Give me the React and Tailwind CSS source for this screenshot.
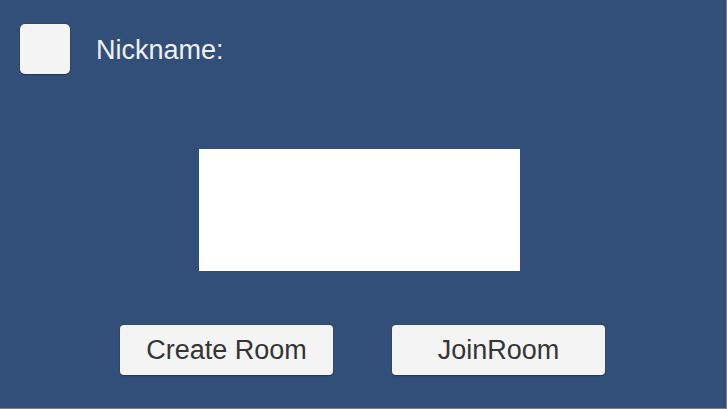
export default function App() {
  const font = { fontFamily: '"Liberation Sans", Arial, sans-serif' };
  return (
    <div className="w-[727px] h-[409px] bg-[#808080]" style={font}>
      <div className="w-[726px] h-[408px] bg-[#314f79] flex flex-col">
        <div className="flex items-center pt-[24px] pl-[20px]">
          <div className="w-[50px] h-[50px] rounded-[5px] bg-[#f4f4f4] shadow-[0_0_0_1px_rgba(60,60,60,0.35),0_1px_1px_rgba(0,0,0,0.35)]" />
          <div className="ml-[26px] text-[27px] leading-none text-[#f0f0f0] mt-[2px]">Nickname:</div>
        </div>
        <div className="ml-[199px] mt-[75px] w-[321px] h-[122px] bg-white" />
        <div className="flex mt-[54px] ml-[120px] gap-[59px]">
          <button className="w-[213px] h-[50px] rounded-[4px] bg-[#f4f4f4] text-[27px] leading-none text-[#353535] shadow-[0_0_0_1px_rgba(60,60,60,0.3),0_1px_1px_rgba(0,0,0,0.35)] flex items-center justify-center">Create Room</button>
          <button className="w-[213px] h-[50px] rounded-[4px] bg-[#f4f4f4] text-[27px] leading-none text-[#353535] shadow-[0_0_0_1px_rgba(60,60,60,0.3),0_1px_1px_rgba(0,0,0,0.35)] flex items-center justify-center">JoinRoom</button>
        </div>
      </div>
    </div>
  );
}
